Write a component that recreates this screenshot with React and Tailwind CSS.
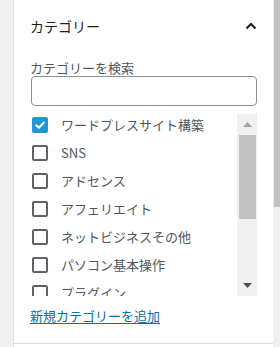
import React from 'react';

const categories = [
  { name: 'ワードプレスサイト構築', checked: true },
  { name: 'SNS' },
  { name: 'アドセンス' },
  { name: 'アフェリエイト' },
  { name: 'ネットビジネスその他' },
  { name: 'パソコン基本操作' },
  { name: 'プラグイン' },
];

const font = { fontFamily: '"Noto Sans CJK JP", "Noto Sans", sans-serif' };

const CheckBox = ({ checked }) =>
  checked ? (
    <span className="w-4 h-4 rounded-[2px] bg-[#2196d3] flex items-center justify-center shrink-0">
      <svg width="12" height="12" viewBox="0 0 12 12" fill="none">
        <path d="M2.3 6.2 L4.9 8.7 L9.8 3.5" stroke="white" strokeWidth="2" strokeLinecap="round" strokeLinejoin="round" />
      </svg>
    </span>
  ) : (
    <span className="w-4 h-4 rounded-[2px] border-2 border-[#5f6368] bg-white shrink-0" />
  );

export default function App() {
  return (
    <div className="w-[280px] h-[347px] flex bg-white overflow-hidden" style={font}>
      {/* left gutter */}
      <div className="w-[13px] bg-[#f0f0f0] border-r border-[#e2e2e2] box-content" />

      {/* panel */}
      <div className="flex-1 flex flex-col">
        <div className="h-[344px] border-b border-[#dcdcde] flex flex-col">
          <div className="h-[50px] flex items-center justify-between pl-4 pr-[16px]">
            <h2 className="text-[14px] text-[#1e1e1e] leading-none pt-[1px]">カテゴリー</h2>
            <svg width="12" height="8" viewBox="0 0 12 8" fill="none" className="mt-[1px]">
              <path d="M1.5 6.5 L6 2 L10.5 6.5" stroke="#1e1e1e" strokeWidth="2.2" />
            </svg>
          </div>

          <div className="pl-4 pr-[16px] pt-[10px]">
            <label className="block text-[13px] text-[#50575e] leading-[15px] mb-[1px]">カテゴリーを検索</label>
            <div className="h-[30px] border border-[#8c8f94] rounded-[4px] ml-[1px]" />
          </div>

          <div className="flex pl-4 pr-[16px] mt-[8px] h-[182px] shrink-0">
            <ul className="flex-1 h-[182px] overflow-hidden pl-[2px]">
              {categories.map((c) => (
                <li key={c.name} className="h-[28px] flex items-start gap-[13px] pt-[3px]">
                  <CheckBox checked={c.checked} />
                  <span className="text-[13px] leading-4 text-[#50575e] whitespace-nowrap">{c.name}</span>
                </li>
              ))}
            </ul>
            {/* list scrollbar */}
            <div className="w-[20px] h-[182px] bg-[#f0f0f0] flex flex-col items-center">
              <div className="h-[21px] flex items-center justify-center">
                <svg width="9" height="5" viewBox="0 0 9 5"><path d="M0 5 L4.5 0 L9 5Z" fill="#a3a3a3" /></svg>
              </div>
              <div className="w-[17px] h-[84px] bg-[#c1c1c1]" />
              <div className="flex-1" />
              <div className="h-[21px] flex items-center justify-center">
                <svg width="9" height="5" viewBox="0 0 9 5"><path d="M0 0 L4.5 5 L9 0Z" fill="#505050" /></svg>
              </div>
            </div>
          </div>

          <div className="pl-4 mt-[9px] leading-[18px]">
            <a href="#" className="text-[13px] text-[#0073aa] underline underline-offset-2">新規カテゴリーを追加</a>
          </div>
        </div>
      </div>

      {/* page scrollbar */}
      <div className="w-[7px] bg-[#f0f0f0] flex flex-col">
        <div className="h-[207px] bg-[#c1c1c1] ml-[1px]" />
      </div>
    </div>
  );
}
